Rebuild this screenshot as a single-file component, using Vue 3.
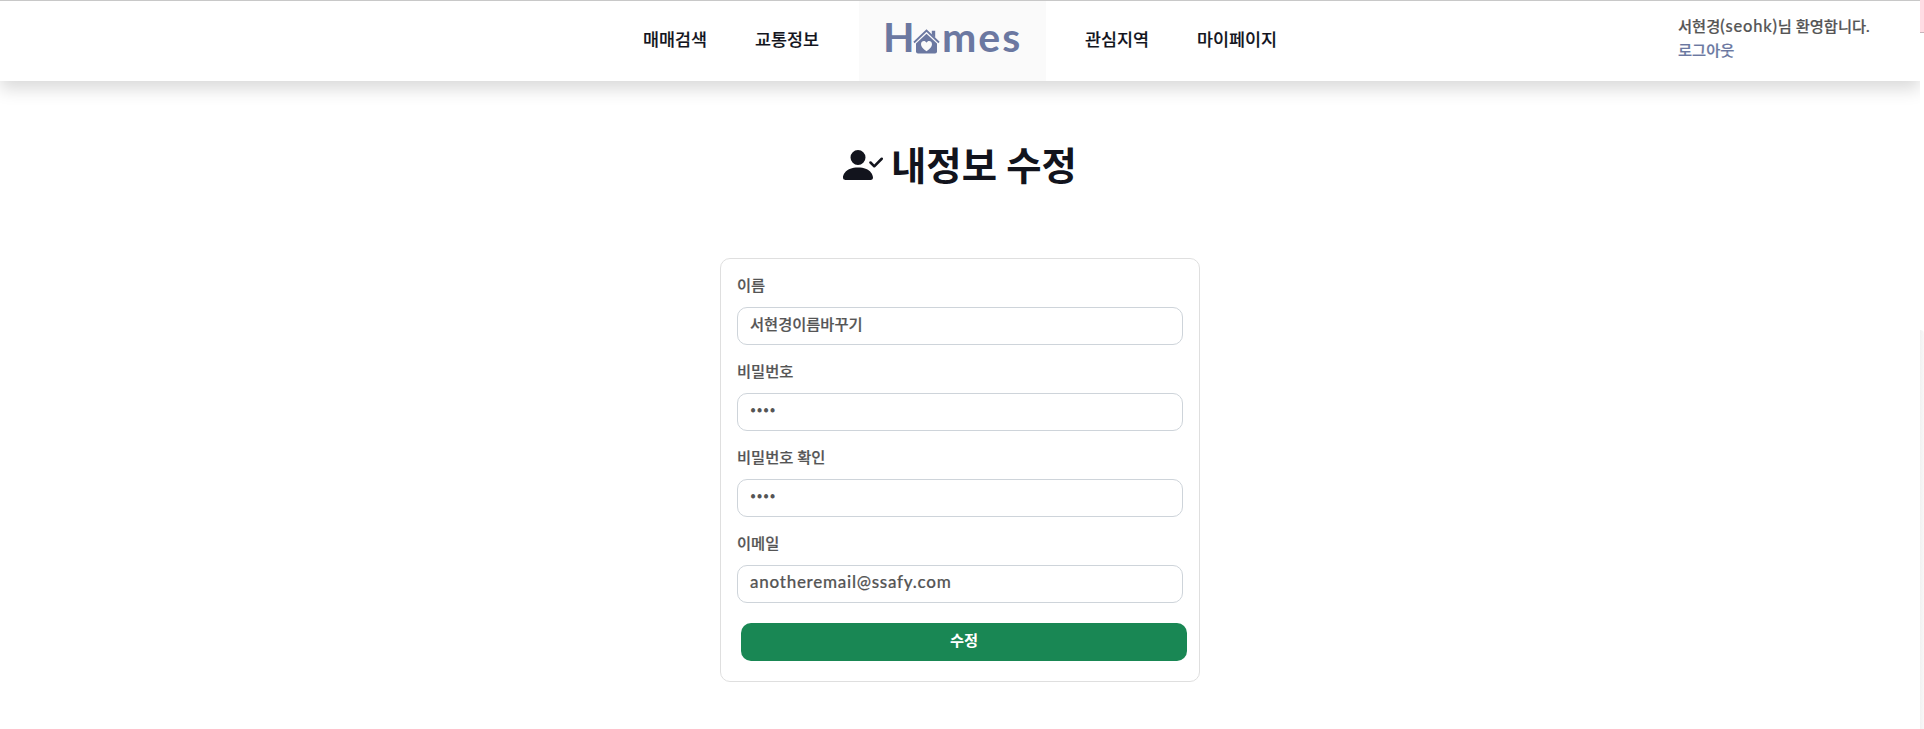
<script setup>
import { ref } from 'vue'

const fields = ref([
  { id: 'name', label: '이름', type: 'text', value: '서현경이름바꾸기' },
  { id: 'password', label: '비밀번호', type: 'password', value: '••••' },
  { id: 'confirm', label: '비밀번호 확인', type: 'password', value: '••••' },
  { id: 'email', label: '이메일', type: 'email', value: 'anotheremail@ssafy.com' },
])
</script>

<template>
  <div class="viewport">
    <div class="page">
      <header class="header">
        <nav class="nav">
          <a class="link">매매검색</a>
          <a class="link">교통정보</a>
          <a class="brand">
            <span class="brand-h">H</span>
            <svg class="house" viewBox="0 0 28 26" width="28" height="26">
              <path d="M1 14.5 13.5 2.5 26 14.5" fill="none" stroke="#6b78a1" stroke-width="1.8" />
              <path d="M18.8 2.8h3.4v7l-3.4-3.2z" fill="#6b78a1" />
              <path d="M13.5 5.8 24 15.6V23.5a2 2 0 0 1-2 2H5a2 2 0 0 1-2-2v-7.9z" fill="#6b78a1" />
              <path d="M13.5 23.2C10 20.7 8 18.7 8 16.2c0-3.300 4-4.200 5.500-1.500C15 12 19 12.900 19 16.200c0 2.500-2 4.500-5.500 7z" fill="#fafafa" />
            </svg>
            <span class="brand-mes">mes</span>
          </a>
          <a class="link">관심지역</a>
          <a class="link">마이페이지</a>
        </nav>
        <div class="user">
          <div>서현경<span class="uid">(seohk)</span>님 환영합니다.</div>
          <a class="logout">로그아웃</a>
        </div>
      </header>

      <h1 class="title">
        <svg viewBox="0 0 16 16" width="40" height="40" fill="currentColor">
          <path d="M15.854 5.146a.5.5 0 0 1 0 .708l-3 3a.5.5 0 0 1-.708 0l-1.500-1.500a.5.5 0 0 1 .708-.708L12.500 7.793l2.646-2.647a.5.5 0 0 1 .708 0z" />
          <path d="M1 14s-1 0-1-1 1-4 6-4 6 3 6 4-1 1-1 1H1zm5-6a3 3 0 1 0 0-6 3 3 0 0 0 0 6z" />
        </svg>
        <span>내정보 수정</span>
      </h1>

      <form class="card" @submit.prevent>
        <div v-for="field in fields" :key="field.id" class="field">
          <label class="label">{{ field.label }}</label>
          <div class="control" :class="field.type">{{ field.value }}</div>
        </div>
        <button class="submit">수정</button>
      </form>
    </div>
    <aside class="edge">
      <div class="edge-pink"></div>
      <div class="edge-grey"></div>
    </aside>
  </div>
</template>

<style>
body {
  overflow: hidden;
  background: #fff;
}
</style>

<style scoped>
* {
  box-sizing: border-box;
}
.viewport {
  display: flex;
  width: 1924px;
  height: 729px;
  overflow: hidden;
  font-family: Lato, "Noto Sans CJK KR", sans-serif;
  font-weight: 500;
  font-size: 15.3px;
  color: #555;
}
.page {
  width: 1920px;
  height: 729px;
  overflow: hidden;
}
.header {
  display: flex;
  justify-content: space-between;
  height: 81px;
  border-top: 1px solid #c8c8c8;
  box-shadow: 0 8px 16px rgba(0, 0, 0, 0.15);
}
.nav {
  display: flex;
  align-items: center;
  padding-left: 643px;
}
.link {
  width: 64px;
  margin-right: 48px;
  padding-bottom: 2px;
  font-size: 17.4px;
  line-height: 26px;
  color: #12141d;
  white-space: nowrap;
  -webkit-text-stroke: 0.15px currentColor;
}
.link:nth-child(2) {
  margin-right: 40px;
}
.brand {
  display: flex;
  align-items: center;
  width: 187px;
  height: 80px;
  margin-right: 39px;
  padding: 0 0 9px 24px;
  background: #fafafa;
  color: #6b78a1;
  font-size: 41px;
  font-weight: 700;
  line-height: 50px;
}
.brand-h {
  width: 31px;
}
.house {
  margin-top: 8px;
  margin-left: -1px;
}
.brand-mes {
  margin-left: 1px;
  letter-spacing: 2px;
}
.user {
  width: 242px;
  padding-top: 13px;
  line-height: 24px;
  white-space: nowrap;
  -webkit-text-stroke: 0.2px currentColor;
}
.uid {
  font-size: 16.5px;
  line-height: 1;
  letter-spacing: 0.8px;
}
.logout {
  color: #6b78a1;
}
.title {
  display: flex;
  align-items: center;
  gap: 8px;
  height: 50px;
  margin: 59px 0 0 843px;
  font-size: 38.4px;
  font-weight: 700;
  line-height: 50px;
  color: #12141d;
  white-space: nowrap;
}
.card {
  width: 480px;
  height: 424px;
  margin: 68px 0 0 720px;
  padding: 14px 16px;
  border: 1px solid #dfdfdf;
  border-radius: 10px;
}
.field {
  height: 86px;
}
.label {
  display: block;
  height: 34px;
  line-height: 24px;
  -webkit-text-stroke: 0.2px currentColor;
}
.control {
  height: 38px;
  padding: 0 12px;
  border: 1px solid #ced4da;
  border-radius: 10px;
  line-height: 32px;
  -webkit-text-stroke: 0.2px currentColor;
}
.password {
  font-size: 10.5px;
  letter-spacing: 0.4px;
  line-height: 33px;
  -webkit-text-stroke: 0;
}
.email {
  font-size: 17px;
  letter-spacing: 0.74px;
}
.submit {
  display: block;
  width: 446px;
  height: 38px;
  margin: 6px 0 0 4px;
  padding: 0 0 7px;
  border: 0;
  border-radius: 10px;
  background: #198754;
  color: #fff;
  font: inherit;
  font-weight: 700;
}
.edge {
  position: relative;
  z-index: 1;
  width: 4px;
  height: 729px;
  background: #fff;
}
.edge-pink {
  height: 33px;
  background: #ffdde4;
  border-bottom: 1px solid #c9b3b9;
}
.edge-grey {
  height: 400px;
  margin-top: 297px;
  background: linear-gradient(90deg, #f1f1f1, #f8f8f8);
  border-top-right-radius: 4px;
}
</style>
